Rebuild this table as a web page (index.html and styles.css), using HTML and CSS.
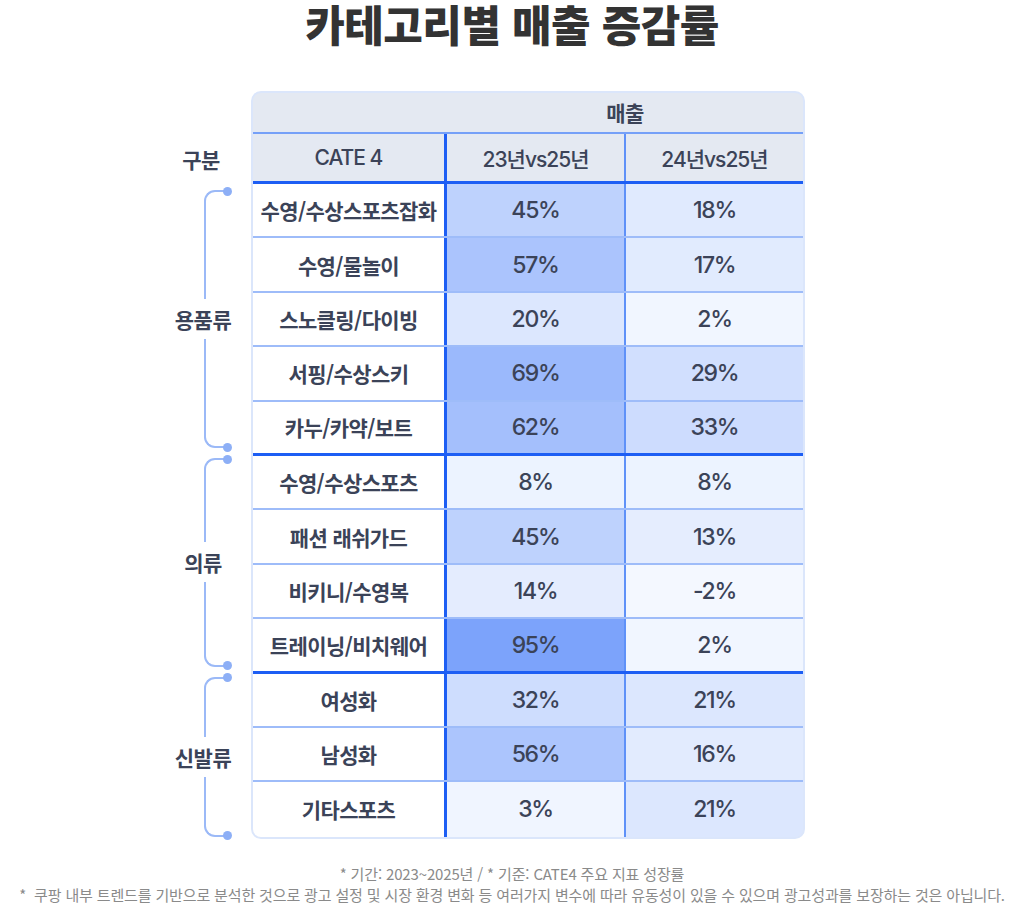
FILE: index.html
```html
<!DOCTYPE html>
<html lang="ko">
<head>
<meta charset="utf-8">
<title>카테고리별 매출 증감률</title>
<link rel="stylesheet" href="styles.css">
</head>
<body>
<h1 class="title">카테고리별 매출 증감률</h1>
<div class="board">
  <div class="side">
    <div class="side-head"><span class="side-label">구분</span></div>
    <div class="group g1"><div class="brace"><span class="brace-label">용품류</span></div></div>
    <div class="group g2"><div class="brace"><span class="brace-label">의류</span></div></div>
    <div class="group g3"><div class="brace"><span class="brace-label">신발류</span></div></div>
  </div>
  <div class="card">
    <div class="head1"><span class="head1-gap"></span><span class="head1-title">매출</span></div>
    <div class="row head2">
      <div class="cell c1">CATE 4</div>
      <div class="cell c2">23년vs25년</div>
      <div class="cell c3">24년vs25년</div>
    </div>
    <div class="row"><div class="cell c1 name">수영/수상스포츠잡화</div><div class="cell c2 num" style="background:rgb(190,210,253)">45%</div><div class="cell c3 num" style="background:rgb(224,234,254)">18%</div></div>
    <div class="row"><div class="cell c1 name">수영/물놀이</div><div class="cell c2 num" style="background:rgb(171,196,253)">57%</div><div class="cell c3 num" style="background:rgb(225,235,254)">17%</div></div>
    <div class="row"><div class="cell c1 name">스노클링/다이빙</div><div class="cell c2 num" style="background:rgb(220,231,254)">20%</div><div class="cell c3 num" style="background:rgb(241,246,255)">2%</div></div>
    <div class="row"><div class="cell c1 name">서핑/수상스키</div><div class="cell c2 num" style="background:rgb(155,185,252)">69%</div><div class="cell c3 num" style="background:rgb(209,223,254)">29%</div></div>
    <div class="row end"><div class="cell c1 name">카누/카약/보트</div><div class="cell c2 num" style="background:rgb(164,191,252)">62%</div><div class="cell c3 num" style="background:rgb(205,220,254)">33%</div></div>
    <div class="row"><div class="cell c1 name">수영/수상스포츠</div><div class="cell c2 num" style="background:rgb(236,243,255)">8%</div><div class="cell c3 num" style="background:rgb(236,243,255)">8%</div></div>
    <div class="row"><div class="cell c1 name">패션 래쉬가드</div><div class="cell c2 num" style="background:rgb(190,210,253)">45%</div><div class="cell c3 num" style="background:rgb(229,237,254)">13%</div></div>
    <div class="row"><div class="cell c1 name">비키니/수영복</div><div class="cell c2 num" style="background:rgb(228,236,254)">14%</div><div class="cell c3 num" style="background:rgb(244,248,255)">-2%</div></div>
    <div class="row end"><div class="cell c1 name">트레이닝/비치웨어</div><div class="cell c2 num" style="background:rgb(124,163,251)">95%</div><div class="cell c3 num" style="background:rgb(241,246,255)">2%</div></div>
    <div class="row"><div class="cell c1 name">여성화</div><div class="cell c2 num" style="background:rgb(206,221,254)">32%</div><div class="cell c3 num" style="background:rgb(220,231,254)">21%</div></div>
    <div class="row"><div class="cell c1 name">남성화</div><div class="cell c2 num" style="background:rgb(172,197,253)">56%</div><div class="cell c3 num" style="background:rgb(226,235,254)">16%</div></div>
    <div class="row last"><div class="cell c1 name">기타스포츠</div><div class="cell c2 num" style="background:rgb(240,245,255)">3%</div><div class="cell c3 num" style="background:rgb(220,231,254)">21%</div></div>
  </div>
</div>
<div class="notes">
  <p class="note">* 기간: 2023~2025년 / * 기준: CATE4 주요 지표 성장률</p>
  <p class="note">*&nbsp; 쿠팡 내부 트렌드를 기반으로 분석한 것으로 광고 설정 및 시장 환경 변화 등 여러가지 변수에 따라 유동성이 있을 수 있으며 광고성과를 보장하는 것은 아닙니다.</p>
</div>
</body>
</html>
```
FILE: styles.css
```css
* { box-sizing: border-box; }
body {
  margin: 0;
  background: #ffffff;
  font-family: Inter, "Noto Sans CJK KR", "Noto Sans", sans-serif;
  color: #3b4358;
}
.title {
  margin: 0;
  text-align: center;
  font-family: "Noto Sans CJK KR", sans-serif;
  font-weight: 900;
  font-size: 43px;
  line-height: 46px;
  letter-spacing: -0.5px;
  color: #333333;
}
.board {
  display: flex;
  margin-top: 45px;
  margin-left: 160px;
}
.side {
  width: 91px;
  display: flex;
  flex-direction: column;
}
.side-head {
  height: 93px;
  padding-top: 43px;
}
.side-label, .brace-label {
  display: block;
  font-family: "Noto Sans CJK KR", sans-serif;
  font-weight: 700;
  font-size: 21px;
  letter-spacing: -0.5px;
  color: #3b4358;
}
.side-label {
  width: 82px;
  line-height: 50px;
  text-align: center;
}
.group {
  padding-left: 44px;
}
.g1 { height: 272px; padding-top: 6px; padding-bottom: 8px; }
.g2 { height: 217.6px; padding-top: 2px; padding-bottom: 7px; }
.g3 { height: 163.2px; padding-top: 3px; padding-bottom: 0; }
.brace {
  position: relative;
  height: 100%;
  width: 24px;
  border: 2px solid #9bb9f7;
  border-right: none;
  border-radius: 11px 0 0 11px;
  display: flex;
  align-items: center;
}
.brace::before, .brace::after {
  content: "";
  position: absolute;
  right: -4px;
  width: 9px;
  height: 9px;
  border-radius: 50%;
  background: #8dafF6;
}
.brace::before { top: -5.5px; }
.brace::after { bottom: -5.5px; }
.brace-label {
  flex: none;
  margin-left: -3px;
  transform: translateX(-50%);
  background: #ffffff;
  padding: 6px 1px;
  line-height: 28px;
}
.card {
  width: 554px;
  border: 2px solid #dbe6fb;
  border-radius: 10px;
  overflow: hidden;
  background: #e4e9f2;
}
.head1 {
  display: grid;
  grid-template-columns: 194px 1fr;
  height: 41px;
  border-bottom: 2px solid #75a0f8;
}
.head1-title {
  text-align: center;
  font-family: "Noto Sans CJK KR", sans-serif;
  font-weight: 700;
  font-size: 21px;
  line-height: 39px;
  letter-spacing: -0.5px;
}
.row {
  display: grid;
  grid-template-columns: 194px 179px 1fr;
  height: 54.4px;
  border-bottom: 2px solid #9ebcf9;
}
.row.end { border-bottom: 3px solid #1d5ef4; }
.row.last { border-bottom: none; }
.row.head2 {
  height: 50px;
  border-bottom: 3px solid #1d5ef4;
}
.cell {
  display: flex;
  align-items: center;
  justify-content: center;
}
.c1 { border-right: 3px solid #1d5ef4; }
.c2 { border-right: 2px solid #5f91f8; }
.head2 .cell {
  font-size: 21px;
  font-weight: 500;
  letter-spacing: -1px;
}
.name {
  background: #ffffff;
  font-family: "Noto Sans CJK KR", sans-serif;
  font-weight: 700;
  font-size: 21px;
  letter-spacing: -0.6px;
}
.num {
  font-size: 23px;
  font-weight: 500;
  letter-spacing: -1.3px;
}
.notes {
  margin-top: 24px;
  text-align: center;
}
.note {
  margin: 0;
  font-family: "Noto Sans CJK KR", sans-serif;
  font-weight: 400;
  font-size: 15px;
  line-height: 21px;
  letter-spacing: -0.15px;
  color: #8a8a8a;
  white-space: nowrap;
}
```
